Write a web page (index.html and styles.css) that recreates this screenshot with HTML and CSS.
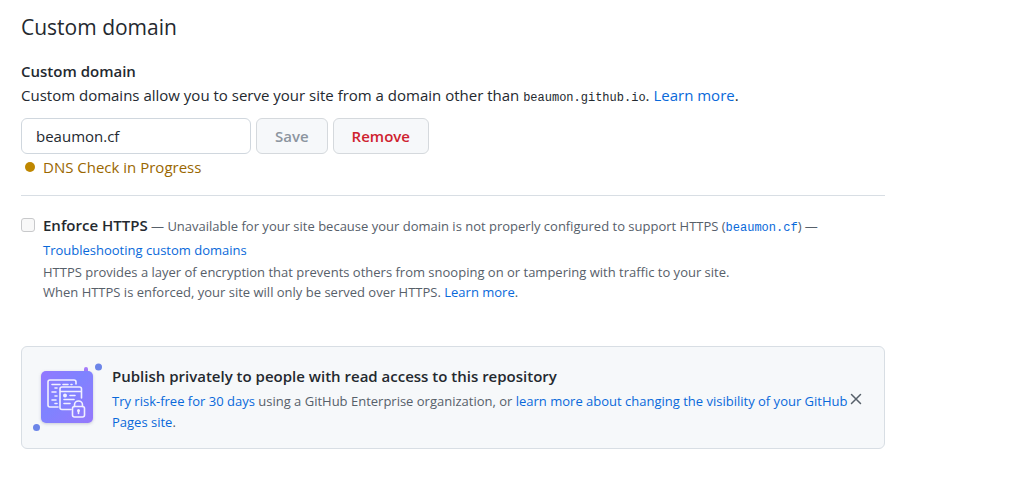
FILE: index.html
```html
<!DOCTYPE html>
<html lang="en">
<head>
<meta charset="utf-8">
<meta name="viewport" content="width=device-width, initial-scale=1">
<title>Custom domain</title>
<link rel="stylesheet" href="styles.css">
</head>
<body>
<main class="settings">
  <h2 class="title">Custom domain</h2>
  <form class="domain">
    <label class="domain-label" for="cname">Custom domain</label>
    <p class="domain-note">Custom domains allow you to serve your site from a domain other than <code>beaumon.github.io</code>. <a href="#">Learn more</a>.</p>
    <div class="domain-row">
      <input class="field" id="cname" type="text" value="beaumon.cf">
      <button class="btn" type="submit" disabled>Save</button>
      <button class="btn btn-danger" type="button">Remove</button>
    </div>
    <p class="status"><span class="status-dot"></span>DNS Check in Progress</p>
  </form>
  <section class="https">
    <input class="check" id="https" type="checkbox" disabled>
    <div class="https-body">
      <p class="https-head"><label class="https-label" for="https">Enforce HTTPS</label> — Unavailable for your site because your domain is not properly configured to support HTTPS (<a href="#"><code>beaumon.cf</code></a>) — <a class="trouble" href="#">Troubleshooting custom domains</a></p>
      <p class="https-note">HTTPS provides a layer of encryption that prevents others from snooping on or tampering with traffic to your site.<br>When HTTPS is enforced, your site will only be served over HTTPS. <a href="#">Learn more</a>.</p>
    </div>
  </section>
  <section class="promo">
    <svg class="promo-art" width="80" height="80" viewBox="0 0 80 80" aria-hidden="true">
      <defs>
        <linearGradient id="tile" x1="0" y1="0" x2="1" y2="1">
          <stop offset="0" stop-color="#9277ff"/>
          <stop offset=".45" stop-color="#7f83ff"/>
          <stop offset="1" stop-color="#9678fc"/>
        </linearGradient>
        <filter id="shade" x="-20%" y="-20%" width="140%" height="140%"><feDropShadow dx="0" dy="1" stdDeviation="1.5" flood-color="#586080" flood-opacity=".3"/></filter>
      </defs>
      <rect x="59" y="9" width="4" height="8" rx="2" fill="#a57bfa"/>
      <rect x="16" y="13" width="52" height="52" rx="5" fill="url(#tile)" filter="url(#shade)"/>
      <circle cx="73.500" cy="9" r="3.500" fill="#6c85e8"/>
      <circle cx="11.500" cy="69.500" r="3.500" fill="#6c85e8"/>
      <g fill="none" stroke="#f2f0ff" stroke-width="1.600" stroke-linecap="round" stroke-linejoin="round">
        <path d="M33 49H25a2 2 0 0 1-2-2V24a2 2 0 0 1 2-2H49a2 2 0 0 1 2 2V26"/>
        <path d="M27 26.500h8M38 26.500h5M46 26.500h1M30 30h2M27 34h4M30 38h2M27 42h4M30 45.500h2"/>
        <path d="M46 51.500H37a2 2 0 0 1-2-2V31a2 2 0 0 1 2-2H54.500a2 2 0 0 1 2 2V40M35 33.500h21"/>
        <path d="M45 37.500h5M39 41.500h10M39 45.500h6"/>
        <path d="M49.500 48.500v-1.500a4 4 0 0 1 8 0v1.500"/>
        <rect x="47.500" y="48.500" width="12" height="10.500" rx="2"/>
        <path d="M53.500 53v2.500"/>
      </g>
      <circle cx="40" cy="37.500" r="2" fill="#f2f0ff"/>
      <circle cx="53.500" cy="52.500" r="1.500" fill="#f2f0ff"/>
    </svg>
    <div class="promo-text">
      <h3 class="promo-title">Publish privately to people with read access to this repository</h3>
      <p class="promo-note"><a href="#">Try risk-free for 30 days</a> using a GitHub Enterprise organization, or <a href="#">learn more about changing the visibility of your GitHub Pages site</a>.</p>
    </div>
    <button class="close" type="button" aria-label="Dismiss">
      <svg width="16" height="16" viewBox="0 0 16 16" aria-hidden="true"><path d="M3.500 3.500l9 9M12.500 3.500l-9 9" stroke="#57606a" stroke-width="1.500" stroke-linecap="round"/></svg>
    </button>
  </section>
</main>
</body>
</html>
```
FILE: styles.css
```css
* { box-sizing: border-box; }
body {
  margin: 0;
  background: #fff;
  color: #24292f;
  font: 15px/24px "Open Sans", "Noto Sans", sans-serif;
}
h2, h3, p { margin: 0; }
a { color: #0969da; text-decoration: none; }
code { font: 12px "Liberation Mono", monospace; }
.settings { max-width: 906px; padding: 10px 21px; }
.title { font-size: 21px; line-height: 34px; font-weight: 400; }
.domain {
  margin-top: 15px;
  padding-bottom: 16px;
  border-bottom: 1px solid #d8dee4;
}
.domain-label { display: block; font-weight: 600; }
.domain-row { display: flex; flex-wrap: wrap; gap: 5px; margin-top: 11px; }
.field {
  width: 230px;
  height: 36px;
  padding: 0 14px;
  border: 1px solid #d0d7de;
  border-radius: 6px;
  background: #fff;
  color: inherit;
  font: inherit;
}
.btn {
  height: 36px;
  padding: 0 18px;
  border: 1px solid #d5d9dd;
  border-radius: 6px;
  background: #f6f8fa;
  color: #cf222e;
  font: 600 15px/20px "Open Sans", "Noto Sans", sans-serif;
}
.btn:disabled { color: #8c959f; }
.status { display: flex; align-items: center; gap: 8px; margin-top: 1px; padding-left: 4px; color: #9a6700; }
.status-dot { width: 10px; height: 10px; border-radius: 50%; background: #bf8700; }
.https { display: flex; gap: 8px; margin-top: 17px; font-size: 13px; color: #57606a; }
.check {
  appearance: none;
  flex: none;
  width: 14px;
  height: 14px;
  margin: 5px 0 0;
  border: 1px solid #c8c9cb;
  border-radius: 3px;
  background: #f8f8f8;
}
.https-label { font-size: 15px; font-weight: 600; color: #24292f; }
.trouble { display: inline-block; }
.https-note { line-height: 20px; }
.promo {
  display: flex;
  align-items: center;
  margin-top: 44px;
  padding: 11px 20px 10px 3px;
  border: 1px solid #d8dee4;
  border-radius: 6px;
  background: #f6f8fa;
}
.promo-art { flex: none; }
.promo-text { flex: 1; padding-left: 7px; }
.promo-title { font-size: 15px; line-height: 24px; font-weight: 600; }
.promo-note { font-size: 13px; line-height: 21px; padding-top: 3px; color: #57606a; }
.close { display: flex; padding: 2px 0 0; border: 0; background: none; }
```
